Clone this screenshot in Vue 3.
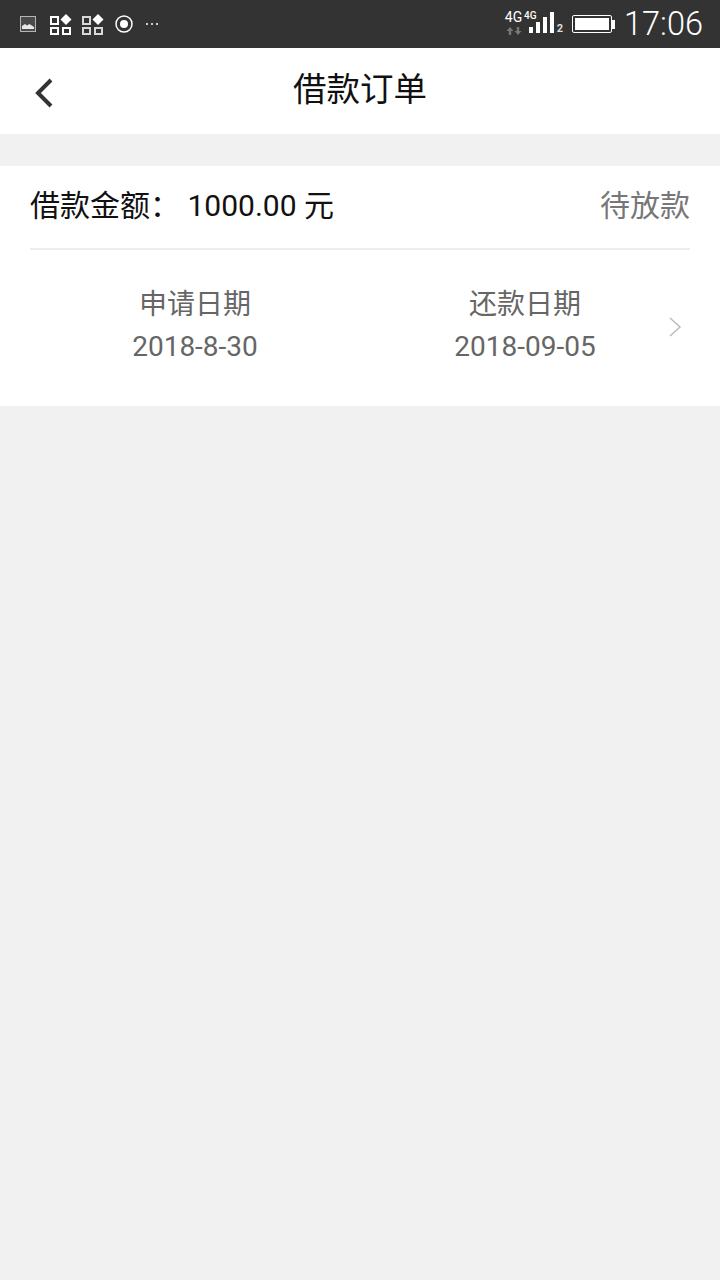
<template>
  <div class="page">
    <div class="status-bar">
      <div class="status-left">
        <svg class="ic-pic" width="16" height="16" viewBox="0 0 16 16">
          <rect x="0.5" y="0.5" width="15" height="15" fill="#4a4a4a" stroke="#b5b5b5" stroke-width="1" />
          <path d="M2 13V10L5 8l2 1.500L9.500 8 14 11v2z" fill="#e8e8e8" />
        </svg>
        <svg class="ic-apps" width="22" height="21" viewBox="0 0 22 21">
          <rect x="1" y="3" width="7" height="7" fill="none" stroke="#fff" stroke-width="2" />
          <rect x="1" y="14" width="7" height="6" fill="none" stroke="#fff" stroke-width="2" />
          <rect x="13" y="14" width="7" height="6" fill="none" stroke="#fff" stroke-width="2" />
          <path d="M16 0l5.500 5.500-5.500 5.500-5.500-5.500z" fill="#fff" />
        </svg>
        <svg class="ic-apps" width="22" height="21" viewBox="0 0 22 21">
          <rect x="1" y="3" width="7" height="7" fill="none" stroke="#d8d8d8" stroke-width="2" />
          <rect x="1" y="14" width="7" height="6" fill="none" stroke="#d8d8d8" stroke-width="2" />
          <rect x="13" y="14" width="7" height="6" fill="none" stroke="#d8d8d8" stroke-width="2" />
          <path d="M16 0l5.500 5.500-5.500 5.500-5.500-5.500z" fill="#fff" />
        </svg>
        <svg class="ic-rec" width="18" height="18" viewBox="0 0 18 18">
          <circle cx="9" cy="9" r="8" fill="none" stroke="#fff" stroke-width="1.500" />
          <circle cx="9" cy="9" r="4" fill="#fff" />
        </svg>
        <span class="dots">
          <i></i><i></i><i></i>
        </span>
      </div>
      <div class="status-right">
        <div class="net">
          <span class="net-main">4G</span>
          <svg width="16" height="8" viewBox="0 0 16 8">
            <path d="M4 0l3.500 4H5.200v4H2.800V4H.5zM12 8L8.500 4h2.300V0h2.400v4h2.300z" fill="#777" />
          </svg>
        </div>
        <div class="signal">
          <span class="net-small">4G</span>
          <div class="bars">
            <i v-for="h in barHeights" :key="h" :style="{ height: h + 'px' }"></i>
          </div>
          <span class="sim">2</span>
        </div>
        <div class="battery">
          <div class="battery-body"><div class="battery-fill"></div></div>
          <div class="battery-tip"></div>
        </div>
        <span class="clock">17:06</span>
      </div>
    </div>

    <div class="nav">
      <svg class="back" width="20" height="30" viewBox="0 0 20 30">
        <path d="M17 2L4 15l13 13" fill="none" stroke="#333" stroke-width="4" />
      </svg>
      <h1 class="nav-title">借款订单</h1>
    </div>

    <div class="card">
      <div class="card-head">
        <div class="amount">借款金额： 1000.00 元</div>
        <div class="state">待放款</div>
      </div>
      <div class="card-body">
        <div class="col">
          <div class="col-label">申请日期</div>
          <div class="col-value">2018-8-30</div>
        </div>
        <div class="col">
          <div class="col-label">还款日期</div>
          <div class="col-value">2018-09-05</div>
        </div>
        <svg class="arrow" width="14" height="22" viewBox="0 0 14 22">
          <path d="M2 2l10 9-10 9" fill="none" stroke="#bbb" stroke-width="1.500" />
        </svg>
      </div>
    </div>
  </div>
</template>

<script setup>
const barHeights = [6, 11, 16, 21]
</script>

<style>
html,
body {
  margin: 0;
  background: #f1f1f1;
}
</style>

<style scoped>
.page {
  width: 720px;
  height: 1280px;
  background: #f1f1f1;
  overflow: hidden;
  font-family: Roboto, "Noto Sans CJK SC", sans-serif;
}

.status-bar {
  height: 48px;
  background: #333;
  display: flex;
  justify-content: space-between;
  align-items: center;
  color: #fff;
}

.status-left {
  display: flex;
  align-items: center;
  padding-left: 20px;
}

.ic-pic {
  margin-right: 14px;
}

.ic-apps {
  margin-right: 10px;
}

.ic-rec {
  margin-left: 1px;
}

.dots {
  display: flex;
  gap: 3px;
  margin-left: 13px;
}

.dots i {
  width: 2px;
  height: 2px;
  background: #ccc;
}

.status-right {
  display: flex;
  align-items: center;
  padding-right: 17px;
}

.net {
  width: 19px;
  display: flex;
  flex-direction: column;
  align-items: center;
  margin-right: 1px;
  margin-bottom: 2px;
}

.net-main {
  font-size: 14px;
  line-height: 13px;
  margin-bottom: 3px;
}

.signal {
  position: relative;
  width: 39px;
  height: 22px;
  margin-right: 9px;
  margin-bottom: 4px;
}

.net-small {
  position: absolute;
  left: 0;
  top: 0;
  font-size: 10px;
  line-height: 10px;
  font-weight: 500;
}

.bars {
  position: absolute;
  left: 5px;
  bottom: 0;
  display: flex;
  align-items: flex-end;
  gap: 3px;
}

.bars i {
  width: 4px;
  background: #fff;
}

.sim {
  position: absolute;
  right: 0;
  bottom: -1px;
  font-size: 11px;
  line-height: 10px;
  font-weight: 700;
  color: #ddd;
}

.battery {
  display: flex;
  align-items: center;
  margin-right: 9px;
}

.battery-body {
  width: 40px;
  height: 18px;
  box-sizing: border-box;
  border: 1px solid #fff;
  border-radius: 2px;
  padding: 2px;
}

.battery-fill {
  height: 100%;
  background: #fff;
}

.battery-tip {
  width: 3px;
  height: 9px;
  background: #fff;
}

.clock {
  font-size: 32.500px;
  font-weight: 300;
  line-height: 48px;
}

.nav {
  position: relative;
  height: 86px;
  background: #fff;
  display: flex;
  justify-content: center;
}

.back {
  position: absolute;
  left: 34px;
  top: 30px;
}

.nav-title {
  margin: 0;
  font-size: 33.500px;
  font-weight: 400;
  line-height: 84px;
  color: #111;
}

.card {
  margin-top: 32px;
  height: 240px;
  background: #fff;
}

.card-head {
  height: 82px;
  margin: 0 30px;
  border-bottom: 2px solid #ededed;
  display: flex;
  justify-content: space-between;
  align-items: center;
}

.amount {
  font-size: 30px;
  color: #111;
  padding-bottom: 8px;
}

.state {
  font-size: 30px;
  color: #777;
  padding-bottom: 8px;
}

.card-body {
  position: relative;
  display: flex;
  padding: 34px 30px 0;
}

.col {
  flex: 1;
  text-align: center;
  color: #666;
  font-size: 28px;
}

.col-label {
  line-height: 42px;
}

.col-value {
  line-height: 41px;
}

.arrow {
  position: absolute;
  right: 38px;
  top: 66px;
}
</style>
